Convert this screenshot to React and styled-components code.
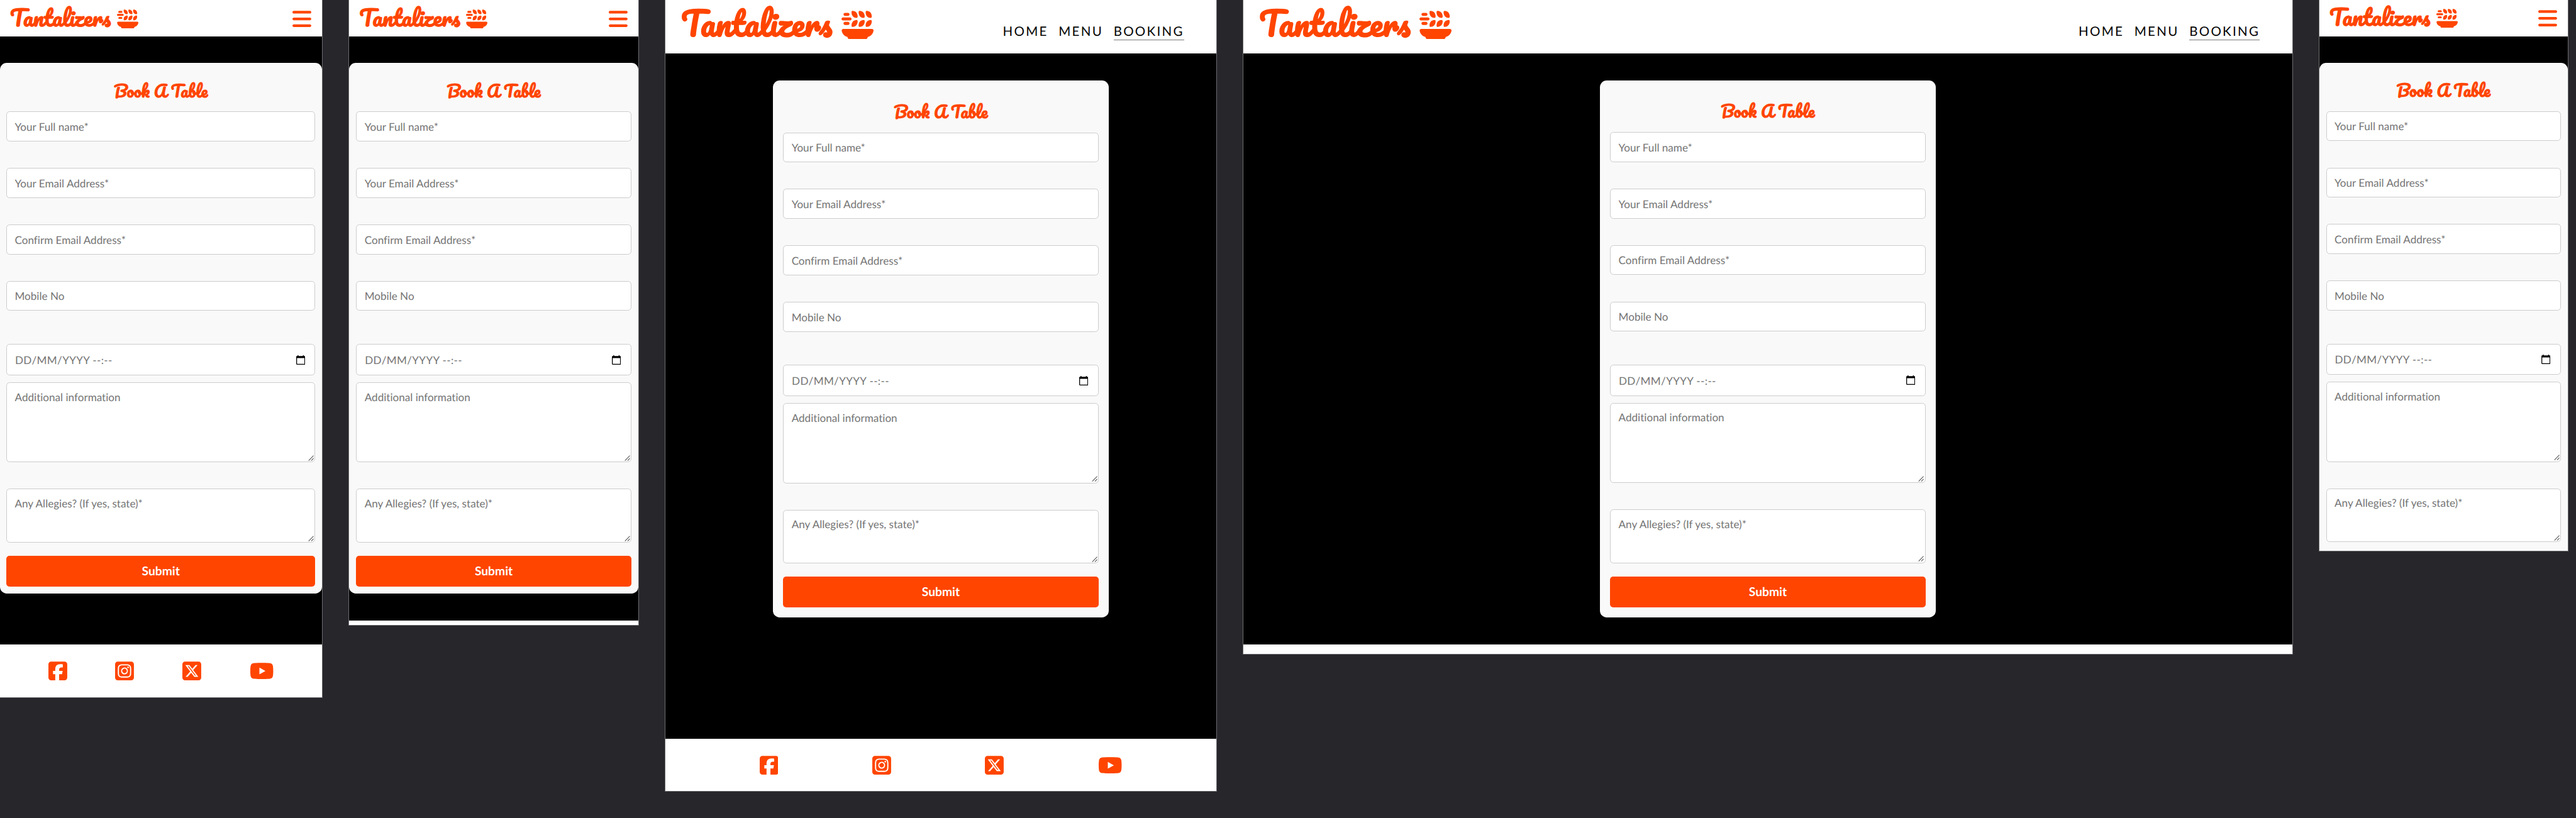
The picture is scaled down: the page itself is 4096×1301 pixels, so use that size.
import React from "react";
import styled, { createGlobalStyle } from "styled-components";
import {
  FaBars,
  FaPlateWheat,
  FaSquareFacebook,
  FaSquareInstagram,
  FaSquareXTwitter,
  FaYoutube,
} from "react-icons/fa6";

// One design unit in CSS pixels: the board is 5747 units wide on a 4096px canvas.
const UNIT = 4096 / 5747;
const u = (n) => `${(n * UNIT).toFixed(3)}px`;

const ORANGE = "#ff4500";

const GlobalStyle = createGlobalStyle`
  *, *::before, *::after { box-sizing: border-box; }
  html, body { margin: 0; background: #27262b; }
  body {
    font-family: Lato, "Open Sans", sans-serif;
    text-rendering: geometricPrecision;
    overflow: hidden;
  }
`;

const Board = styled.main`
  display: flex;
  align-items: flex-start;
  gap: ${u(58)};
  width: 4096px;
  height: 1301px;
  background: #27262b;
`;

const Screen = styled.section`
  flex: none;
  display: flex;
  flex-direction: column;
  width: ${(p) => u(p.$width)};
  height: ${(p) => u(p.$height)};
  overflow: hidden;
  background: #fff;
  border: 1px solid #6d6d70;
  border-top: 0;
  ${(p) => p.$flushLeft && "border-left: 0;"}
`;

const Header = styled.header`
  flex: none;
  display: flex;
  justify-content: space-between;
  align-items: flex-start;
  height: ${(p) => u(p.$height)};
  padding: ${(p) => u(p.$top)} ${(p) => (p.$wide ? u(72) : u(24))} 0
    ${(p) => (p.$wide ? u(35) : u(22.6))};
  background: #fff;
`;

const Brand = styled.div`
  display: flex;
  align-items: flex-start;
  gap: ${(p) => (p.$wide ? u(20.4) : u(13.5))};
  color: ${ORANGE};
  font-size: ${(p) => (p.$wide ? u(72) : u(48))};
`;

const BrandName = styled.span`
  margin-top: ${u(-2.6)};
  font-family: Pacifico, cursive;
  font-weight: 700;
  line-height: 1;
  white-space: nowrap;
`;

const MenuButton = styled.button`
  display: flex;
  padding: 0;
  border: 0;
  background: none;
  color: ${ORANGE};
  font-size: ${u(48)};

  svg { width: 0.875em; }
`;

const Nav = styled.nav`
  display: flex;
  align-items: flex-start;
  gap: ${u(23.3)};
  margin-top: ${u(32.2)};
`;

const NavLink = styled.a`
  height: ${u(38)};
  line-height: ${u(38)};
  font-size: ${u(28.8)};
  letter-spacing: ${u(3.2)};
  color: #000;
  border-bottom: 1px solid ${(p) => (p.$active ? "#777" : "transparent")};
`;

const Stage = styled.div`
  flex: none;
  display: flex;
  justify-content: center;
  align-items: flex-start;
  height: ${(p) => u(p.$height)};
  padding-top: ${(p) => u(p.$top)};
  background: #000;
`;

const Card = styled.form`
  display: flex;
  flex-direction: column;
  width: ${(p) => (p.$wide ? u(750) : "100%")};
  padding: ${(p) => (p.$wide ? `${u(24)} ${u(23)} ${u(22)}` : `${u(16)} ${u(15)}`)};
  ${(p) => p.$flushLeft && `padding-left: ${u(14)};`}
  border-radius: ${u(15)};
  background: #f9f9f9;
`;

const Title = styled.h2`
  height: ${u(92)};
  margin: 0;
  padding-top: ${u(27.8)};
  color: ${ORANGE};
  font-family: Pacifico, cursive;
  font-size: ${u(36)};
  font-weight: 700;
  line-height: 1;
  text-align: center;
`;

const Field = styled.div`
  position: relative;
  display: flex;
  justify-content: space-between;
  height: ${(p) => u(p.$height)};
  margin-bottom: ${(p) => u(p.$after)};
  padding: ${(p) => u(p.$pad)} ${u(22)} 0 ${(p) => u(p.$indent || 17.6)};
  border: 1px solid #ccc;
  border-radius: ${u(7.5)};
  background: #fff;
  color: #757575;
  font-size: ${u(24)};
  font-variant-ligatures: none;
  line-height: ${u(28)};
  letter-spacing: ${(p) => u(p.$tracking || 0)};
  white-space: nowrap;
`;

const Grip = styled.svg`
  position: absolute;
  right: ${u(1.5)};
  bottom: ${u(1.5)};
  width: ${u(13)};
  height: ${u(13)};
  stroke: #555;
  stroke-width: 1.5;
`;

const CalendarIcon = styled.svg`
  width: ${u(20)};
  height: ${u(21)};
  margin-top: ${u(2.8)};
`;

const Submit = styled.button`
  height: ${u(68.6)};
  padding: 0;
  border: 0;
  border-radius: ${u(7)};
  background: ${ORANGE};
  color: #fff;
  font: 700 ${u(27)} / 1.2 Lato, sans-serif;
  text-rendering: inherit;
`;

const Footer = styled.footer`
  flex: 1;
  display: flex;
  justify-content: space-evenly;
  padding-top: ${u(35)};
  background: #fff;
`;

const SocialLink = styled.a`
  display: flex;
  height: ${u(48)};
  color: ${ORANGE};
  font-size: ${u(48)};

  svg { width: ${(p) => (p.$broad ? "1.125em" : "0.875em")}; }
`;

function Calendar() {
  return (
    <CalendarIcon viewBox="0 0 20 21">
      <path
        fill="#000"
        fillRule="evenodd"
        d="M3 0h2v1.6h10V0h2v1.6h1.4a1.6 1.6 0 0 1 1.6 1.6v16.2a1.6 1.6 0 0 1-1.6 1.6H1.6A1.6 1.6 0 0 1 0 19.4V3.2A1.6 1.6 0 0 1 1.6 1.6H3zM1.8 6.4V19.2H18.2V6.4z"
      />
    </CalendarIcon>
  );
}

function ResizeGrip() {
  return (
    <Grip viewBox="0 0 13 13">
      <path d="M1 12L12 1M7 12L12 7" />
    </Grip>
  );
}

function BookingForm({ wide, flushLeft }) {
  return (
    <Card $wide={wide} $flushLeft={flushLeft}>
      <Title>Book A Table</Title>
      <Field $height={66.7} $after={59.3} $pad={19}>Your Full name*</Field>
      <Field $height={66.7} $after={59.3} $pad={19}>Your Email Address*</Field>
      <Field $height={66.7} $after={59.3} $pad={19}>Confirm Email Address*</Field>
      <Field $height={66.7} $after={74.3} $pad={19}>Mobile No</Field>
      <Field $height={69.7} $after={15.3} $pad={20.3} $indent={18.2} $tracking={0.5}>
        DD/MM/YYYY --:--
        <Calendar />
      </Field>
      <Field $height={179} $after={59} $pad={17.8}>
        Additional information
        <ResizeGrip />
      </Field>
      <Field $height={120} $after={29.8} $pad={17.8}>
        Any Allegies? (If yes, state)*
        <ResizeGrip />
      </Field>
      <Submit type="button">Submit</Submit>
    </Card>
  );
}

function Socials() {
  return (
    <>
      <SocialLink><FaSquareFacebook /></SocialLink>
      <SocialLink><FaSquareInstagram /></SocialLink>
      <SocialLink><FaSquareXTwitter /></SocialLink>
      <SocialLink $broad><FaYoutube /></SocialLink>
    </>
  );
}

function BookingScreen({ width, height, header, stage, top, wide, flushLeft, socials }) {
  // The header's content keeps its distance to the header's lower edge.
  const headerTop = wide ? header - 99.6 : header - 64;
  return (
    <Screen $width={width} $height={height} $flushLeft={flushLeft}>
      <Header $height={header} $top={headerTop} $wide={wide}>
        <Brand $wide={wide}>
          <BrandName>Tantalizers</BrandName>
          <FaPlateWheat />
        </Brand>
        {wide ? (
          <Nav>
            <NavLink>HOME</NavLink>
            <NavLink>MENU</NavLink>
            <NavLink $active>BOOKING</NavLink>
          </Nav>
        ) : (
          <MenuButton type="button">
            <FaBars />
          </MenuButton>
        )}
      </Header>
      <Stage $height={stage} $top={top}>
        <BookingForm wide={wide} flushLeft={flushLeft} />
      </Stage>
      <Footer>{socials && <Socials />}</Footer>
    </Screen>
  );
}

export default function App() {
  return (
    <>
      <GlobalStyle />
      <Board>
        <BookingScreen width={720} height={1557} header={82} stage={1356.3} top={59} flushLeft socials />
        <BookingScreen width={647} height={1395.5} header={82} stage={1302.6} top={59} />
        <BookingScreen width={1232} height={1767} header={119.6} stage={1529.4} top={60} wide socials />
        <BookingScreen width={2342} height={1460} header={119} stage={1319} top={60} wide />
        <BookingScreen width={557} height={1230} header={81} stage={1300} top={59} />
      </Board>
    </>
  );
}
